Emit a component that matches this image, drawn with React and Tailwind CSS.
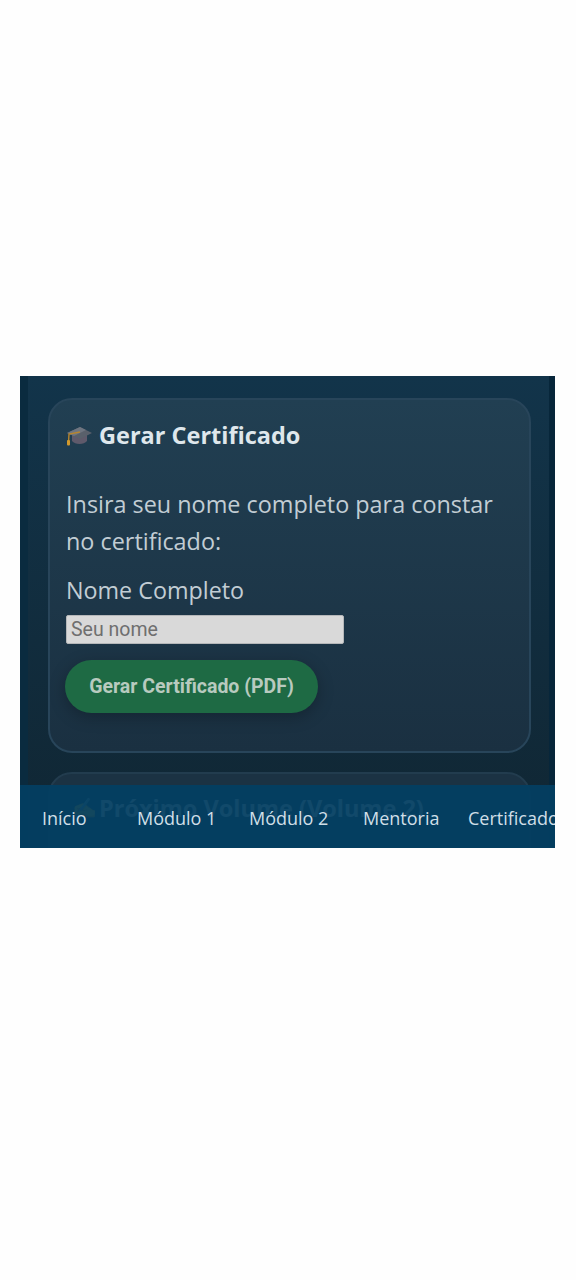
import React from "react";

const navItems = [
  { label: "Início", className: "w-[95px]" },
  { label: "Módulo 1", className: "w-[112px]" },
  { label: "Módulo 2", className: "w-[114px]" },
  { label: "Mentoria", className: "w-[105px]" },
  { label: "Certificado", className: "" },
];

const GradCap = ({ className }) => (
  <svg viewBox="0 0 26 22" className={className}>
    <path d="M6 11 L6 17 C9 21 18 21 21 17 L21 11 Z" fill="#5f5a6b" />
    <path d="M1 9 L14 3 L26 9 L14 15 Z" fill="#59606b" />
    <path d="M1 9 L14 3 L20 6 L8 12 Z" fill="#6e7580" />
    <path d="M14 8 L3 10 L2.6 17" fill="none" stroke="#b8862d" strokeWidth="1.4" />
    <rect x="1" y="16" width="3" height="5.5" rx="1" fill="#d39a2c" />
  </svg>
);

const App = () => {
  return (
    <div className="min-h-[1280px] bg-[#fefefe] pt-[376px] pl-[20px] pr-[21px] font-['Open_Sans',sans-serif]">
      <div className="relative h-[472px] overflow-hidden bg-gradient-to-b from-[#12344a] to-[#102633] pl-[28px] pr-[24px] pt-[22px] shadow-[inset_8px_0_0_#0a2b3f,inset_-6px_0_0_#07263a]">
        <div className="h-[355px] rounded-[24px] border-2 border-[#28455a] bg-gradient-to-b from-[#213f52] to-[#1a3041] pl-[16px] pt-[15px]">
          <div className="flex h-[40px] items-center">
            <GradCap className="mr-[7px] h-[22px] w-[26px]" />
            <h2 className="text-[23.5px] leading-[40px] font-bold text-[#dfe7ec]">Gerar Certificado</h2>
          </div>
          <p className="mt-[31px] w-[450px] text-[23.4px] leading-[37px] text-[#c2cdd4]">
            Insira seu nome completo para constar no certificado:
          </p>
          <label className="mt-[12px] block text-[23.3px] leading-[37px] text-[#c2cdd4]">Nome Completo</label>
          <input
            placeholder="Seu nome"
            className="mt-[6px] block h-[29px] w-[278px] rounded-[2px] border border-[#b5b7b9] bg-[#d9d9d9] px-[4px] font-['Roboto',sans-serif] text-[19.5px] text-[#6f6f6f] placeholder:text-[#6f6f6f]"
          />
          <button className="ml-[-1px] mt-[16px] h-[53px] w-[253px] rounded-full bg-[#1e6a44] font-['Roboto',sans-serif] text-[19.5px] font-bold text-[#b8cabf] shadow-[0_4px_16px_rgba(0,0,0,0.25)]">
            Gerar Certificado (PDF)
          </button>
        </div>
        <div className="mt-[19px] flex h-[120px] items-start rounded-[24px] border-2 border-[#223c4e] bg-[#1b3243] pl-[22px] pt-[14px]">
          <span className="mr-[2px] text-[20px] leading-[40px] text-[#e3eaef]">✍</span>
          <h2 className="text-[23.5px] leading-[40px] font-bold text-[#e3eaef]">Próximo Volume (Volume 2)</h2>
        </div>
        <nav className="absolute inset-x-0 bottom-0 flex h-[63px] items-center overflow-hidden whitespace-nowrap bg-[#033f62]/94 pl-[22px] pt-[4px] text-[18px] text-[#d0dee7]">
          {navItems.map((item) => (
            <span key={item.label} className={`shrink-0 ${item.className}`}>
              {item.label}
            </span>
          ))}
        </nav>
      </div>
    </div>
  );
};

export default App;
